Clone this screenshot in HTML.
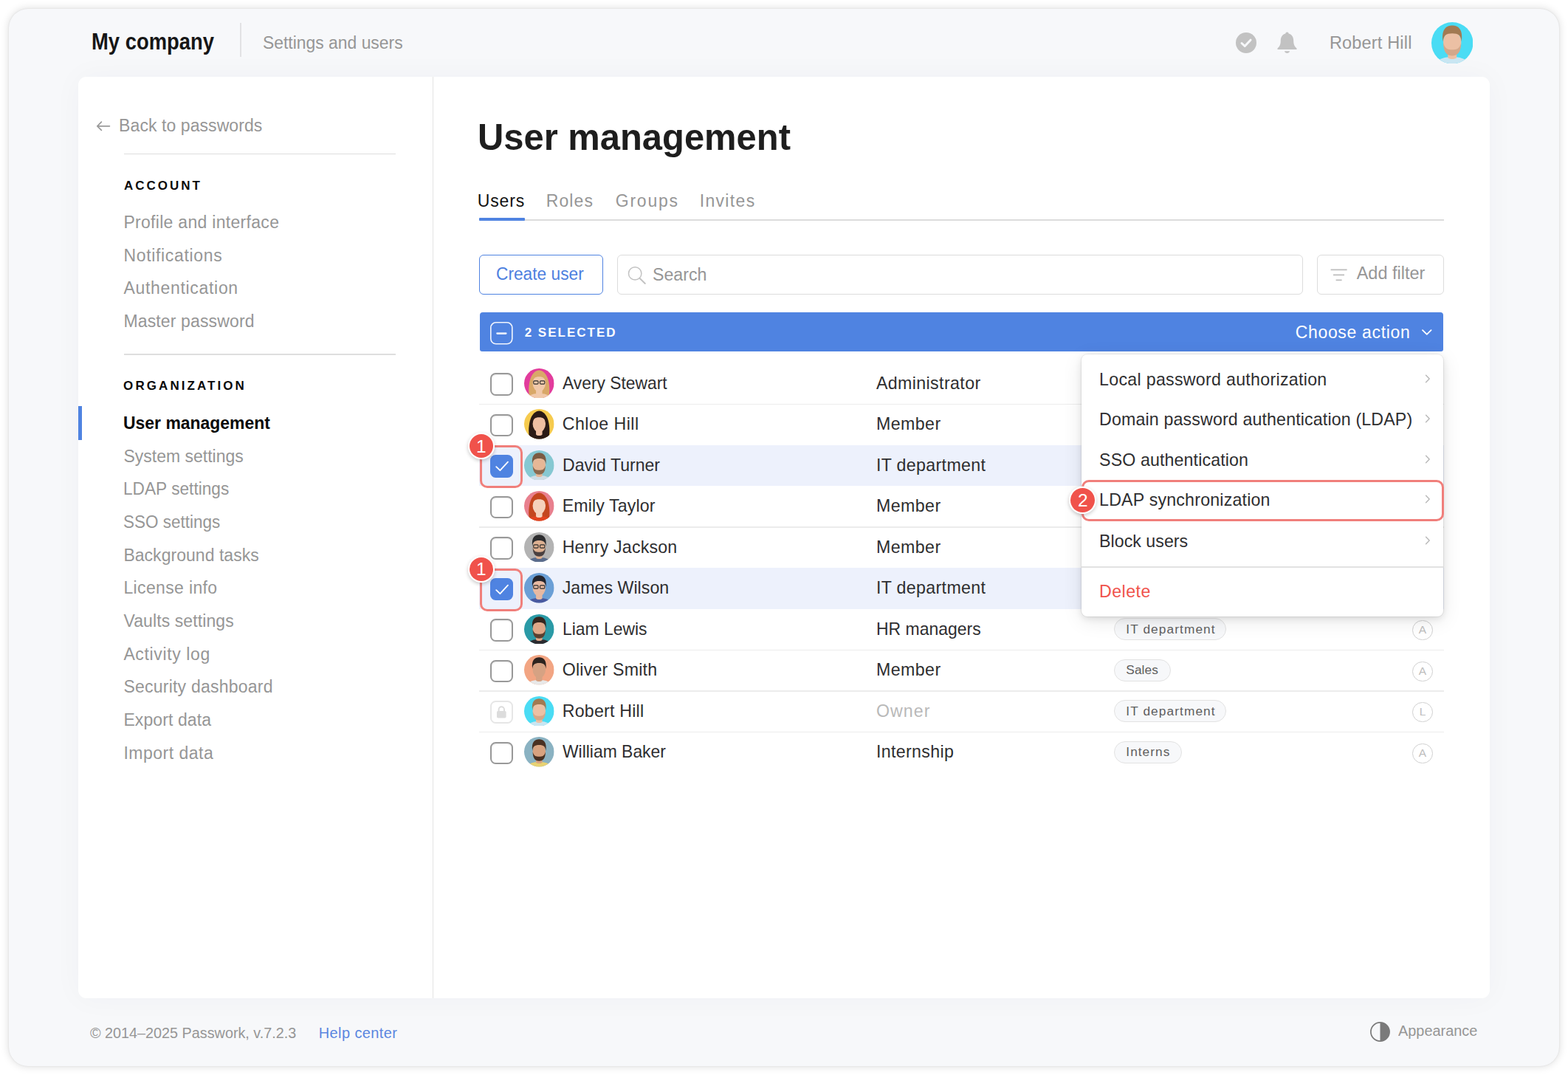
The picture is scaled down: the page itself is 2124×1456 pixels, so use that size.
<!DOCTYPE html>
<html lang="en"><head><meta charset="utf-8"><title>User management</title>
<style>
*{box-sizing:border-box;margin:0;padding:0}
html,body{width:2124px;height:1456px;background:#fff;overflow:hidden}
body{position:relative;font-family:"Liberation Sans",sans-serif;-webkit-font-smoothing:antialiased}
.abs{position:absolute;display:block}
.t{position:absolute;white-space:nowrap;line-height:1;display:block;transform-origin:0 0}
.frame{left:12px;top:12px;width:2100px;height:1432px;border-radius:26px;background:#f7f8fa;box-shadow:0 0 12px rgba(0,0,0,.15),0 0 2px rgba(0,0,0,.10)}
.card{left:106px;top:104.3px;width:1912px;height:1247.5px;border-radius:11px;background:#fff;box-shadow:0 0 40px rgba(40,50,80,.035)}
.hl{height:1.5px;background:#dedede}
.rowline{left:649px;width:1307px;height:1.4px;background:#ececec}
.rowsel{left:649px;width:1307px;height:55.2px;background:#edf1fc}
.cb{width:30.5px;height:30.5px;border-radius:7.5px;border:2px solid #999;background:#fff;box-shadow:inset 0 1px 2px rgba(0,0,0,.10)}
.cbc{width:30.5px;height:30.5px;border-radius:7.5px;background:#4f83e1}
.tag{height:29.8px;border-radius:15px;background:#f7f8fa;border:1.5px solid #e2e2e2}
.auth{width:27.4px;height:27.4px;border-radius:50%;border:1.9px solid #d0d0d0;background:#fff;color:#bdbdbd;font-size:15.5px;line-height:24px;text-align:center}
.redbox{border:3.3px solid #f07f7b;border-radius:10px}
.badge{width:32px;height:32px;border-radius:50%;background:#f0524b;box-shadow:0 0 0 2.2px #fff,0 2px 5px 2px rgba(0,0,0,.22);color:#fff;font-size:24.5px;line-height:32px;text-align:center}
</style></head><body>

<div class="abs frame"></div>
<div class="abs card"></div>
<div class="abs" style="left:325px;top:30.5px;width:1.5px;height:46px;background:#e2e2e4"></div>
<svg class="abs" style="left:1674px;top:44px" width="28" height="28" viewBox="0 0 28 28"><circle cx="14" cy="14" r="14" fill="#c2c2c2"/><path d="M8 14.5 L12.2 18.5 L20 10.2" fill="none" stroke="#f7f8fa" stroke-width="3" stroke-linecap="round" stroke-linejoin="round"/></svg>
<svg class="abs" style="left:1729px;top:42px" width="29" height="32" viewBox="0 0 29 32"><path d="M14.5 1.5 C15.8 1.5 16.6 2.4 16.6 3.6 C21 4.8 23.2 8.4 23.2 13 C23.2 18.5 24.6 21 27.5 23.4 L27.5 25 L1.5 25 L1.5 23.4 C4.4 21 5.8 18.5 5.8 13 C5.8 8.4 8 4.8 12.4 3.6 C12.4 2.4 13.2 1.5 14.5 1.5 Z" fill="#c2c2c2"/><path d="M11 27.2 L18 27.2 C17.6 29 16.3 30 14.5 30 C12.7 30 11.4 29 11 27.2 Z" fill="#c2c2c2"/></svg>
<svg class="abs" style="left:1938.8px;top:29.8px" width="56.4" height="56.4" viewBox="0 0 40 40"><defs><clipPath id="avH"><circle cx="20" cy="20" r="20"/></clipPath></defs><g clip-path="url(#avH)"><rect width="40" height="40" fill="#4adcf4"/><path d="M3 46 C3 35.5 11 33.6 20 33.6 C29 33.6 37 35.5 37 46 Z" fill="#c9e6f2"/><path d="M15.8 28 H24.2 V34 C22.8 36 17.2 36 15.8 34 Z" fill="#ecc0a4"/><ellipse cx="20" cy="19.6" rx="8.6" ry="11.2" fill="#ecc0a4"/><path d="M11.5 20 C11.6 30.4 16 32.2 20 32.2 C24 32.2 28.4 30.4 28.5 20 C27 25.6 24.4 26.4 20 26.4 C15.6 26.4 13 25.6 11.5 20 Z" fill="#d3a88a"/><path d="M11 18.6 C9.4 6.4 14.6 3.2 20 3.2 C25.4 3.2 30.6 6.4 29 18.6 C28.2 12.6 26 10.8 20 10.8 C14 10.8 11.8 12.6 11 18.6 Z" fill="#a27a52"/></g></svg>
<div class="abs" style="left:586.2px;top:104px;width:1.3px;height:1248px;background:#e3e3e3"></div>
<svg class="abs" style="left:130px;top:162px" width="20" height="18" viewBox="0 0 20 18"><path d="M18.4 8.8 L2.2 8.8 M7.4 3.2 L1.8 8.8 L7.4 14.4" fill="none" stroke="#9a9a9a" stroke-width="1.7" stroke-linecap="round" stroke-linejoin="round"/></svg>
<div class="abs hl" style="left:168px;top:207.6px;width:368px"></div>
<div class="abs hl" style="left:168px;top:479px;width:368px"></div>
<div class="abs" style="left:106px;top:550px;width:4.6px;height:46px;background:#4f83e1"></div>
<svg class="abs" style="left:1855px;top:1382.6px" width="29" height="29" viewBox="0 0 29 29"><circle cx="14.5" cy="14.5" r="12.6" fill="none" stroke="#7a7a7a" stroke-width="1.7"/><path d="M14.5 1.9 A12.6 12.6 0 0 1 14.5 27.1 Z" fill="#7a7a7a"/></svg>
<div class="abs" style="left:649px;top:297px;width:1307px;height:1.6px;background:#dcdcdc"></div>
<div class="abs" style="left:649px;top:295.2px;width:62px;height:3.6px;background:#4f83e1;border-radius:1px"></div>
<div class="abs" style="left:648.5px;top:345.1px;width:168.7px;height:53.7px;border:1.8px solid #4f83e1;border-radius:6px;background:#fff"></div>
<div class="abs" style="left:835.6px;top:345.1px;width:929.5px;height:53.7px;border:1.7px solid #dcdcdc;border-radius:6px;background:#fff"></div>
<svg class="abs" style="left:848px;top:358px" width="30" height="30" viewBox="0 0 30 30"><circle cx="12.2" cy="12.4" r="8.7" fill="none" stroke="#c2c2c2" stroke-width="1.5"/><path d="M18.4 18.8 L25.8 26" stroke="#c2c2c2" stroke-width="1.9" stroke-linecap="round"/></svg>
<div class="abs" style="left:1784.2px;top:345.1px;width:171.4px;height:53.7px;border:1.7px solid #dcdcdc;border-radius:6px;background:#fff"></div>
<svg class="abs" style="left:1800px;top:362px" width="28" height="20" viewBox="0 0 28 20"><path d="M2.6 3.4 H24.6 M6 10.4 H21 M9.6 17.4 H17.6" stroke="#bdbdbd" stroke-width="1.8" stroke-linecap="butt"/></svg>
<div class="abs" style="left:650px;top:423.3px;width:1305px;height:52.6px;background:#4f83e1;border-radius:4px 4px 3px 3px"></div>
<svg class="abs" style="left:663.3px;top:435.2px" width="33" height="33" viewBox="0 0 33 33"><rect x="1.8" y="1.8" width="29" height="29" rx="7" fill="none" stroke="#fff" stroke-opacity=".92" stroke-width="1.6"/><path d="M10.6 16.6 H22.2" stroke="#fff" stroke-opacity=".85" stroke-width="2.8" stroke-linecap="round"/></svg>
<svg class="abs" style="left:1924px;top:444px" width="18" height="12" viewBox="0 0 18 12"><path d="M3 3.2 L8.8 8.8 L14.6 3.2" fill="none" stroke="#fff" stroke-width="1.8" stroke-linecap="round" stroke-linejoin="round"/></svg>
<div class="abs rowsel" style="top:602.90px"></div>
<div class="abs rowsel" style="top:769.40px"></div>
<div class="abs rowline" style="top:546.80px"></div>
<div class="abs rowline" style="top:713.30px"></div>
<div class="abs rowline" style="top:879.80px"></div>
<div class="abs rowline" style="top:935.30px"></div>
<div class="abs rowline" style="top:990.80px"></div>
<div class="abs cb" style="left:664.3px;top:505.15px"></div>
<svg class="abs" style="left:710.3px;top:498.6px" width="40.6" height="40.6" viewBox="0 0 40 40"><defs><clipPath id="av0"><circle cx="20" cy="20" r="20"/></clipPath></defs><g clip-path="url(#av0)"><rect width="40" height="40" fill="#e23c9c"/><path d="M7.5 42 C4 26 7 3.5 20 2.5 C33 3.5 36 26 32.5 42 Z" fill="#d9a868"/><path d="M3 46 C3 35.5 11 33.6 20 33.6 C29 33.6 37 35.5 37 46 Z" fill="#f1c9ab"/><path d="M15.8 28 H24.2 V34 C22.8 36 17.2 36 15.8 34 Z" fill="#f1c9ab"/><ellipse cx="20" cy="19.6" rx="8.6" ry="11.2" fill="#f1c9ab"/><path d="M10.6 21 C9.6 8.5 14 5.6 20 5.6 C26 5.6 30.4 8.5 29.4 21 C28.6 13 25.4 11 20 11 C14.6 11 11.4 13 10.6 21 Z" fill="#d9a868"/><g fill="none" stroke="#2a2a2a" stroke-width="1.1"><rect x="12.6" y="16.6" width="6.2" height="4.2" rx="1.2"/><rect x="21.2" y="16.6" width="6.2" height="4.2" rx="1.2"/></g></g></svg>
<div class="abs cb" style="left:664.3px;top:560.65px"></div>
<svg class="abs" style="left:710.3px;top:554.1px" width="40.6" height="40.6" viewBox="0 0 40 40"><defs><clipPath id="av1"><circle cx="20" cy="20" r="20"/></clipPath></defs><g clip-path="url(#av1)"><rect width="40" height="40" fill="#f6cb4e"/><path d="M7.5 42 C4 26 7 3.5 20 2.5 C33 3.5 36 26 32.5 42 Z" fill="#2b1a15"/><path d="M3 46 C3 35.5 11 33.6 20 33.6 C29 33.6 37 35.5 37 46 Z" fill="#2b1a15"/><path d="M15.8 28 H24.2 V34 C22.8 36 17.2 36 15.8 34 Z" fill="#efbfa2"/><ellipse cx="20" cy="19.6" rx="8.6" ry="11.2" fill="#efbfa2"/><path d="M10.6 21 C9.6 8.5 14 5.6 20 5.6 C26 5.6 30.4 8.5 29.4 21 C28.6 13 25.4 11 20 11 C14.6 11 11.4 13 10.6 21 Z" fill="#2b1a15"/></g></svg>
<div class="abs cbc" style="left:664.3px;top:616.15px"></div>
<svg class="abs" style="left:664.3px;top:616.15px" width="30.5" height="30.5" viewBox="0 0 30.5 30.5"><path d="M8.2 16.2 L13.4 21.2 L24 9.6" fill="none" stroke="#fff" stroke-width="1.8" stroke-linecap="round" stroke-linejoin="round"/></svg>
<svg class="abs" style="left:710.3px;top:609.6px" width="40.6" height="40.6" viewBox="0 0 40 40"><defs><clipPath id="av2"><circle cx="20" cy="20" r="20"/></clipPath></defs><g clip-path="url(#av2)"><rect width="40" height="40" fill="#86c8d2"/><path d="M3 46 C3 35.5 11 33.6 20 33.6 C29 33.6 37 35.5 37 46 Z" fill="#cfdde6"/><path d="M15.8 28 H24.2 V34 C22.8 36 17.2 36 15.8 34 Z" fill="#e6b796"/><ellipse cx="20" cy="19.6" rx="8.6" ry="11.2" fill="#e6b796"/><path d="M11.5 20 C11.6 30.4 16 32.2 20 32.2 C24 32.2 28.4 30.4 28.5 20 C27 25.6 24.4 26.4 20 26.4 C15.6 26.4 13 25.6 11.5 20 Z" fill="#8a6a50"/><path d="M11 18.6 C9.4 6.4 14.6 3.2 20 3.2 C25.4 3.2 30.6 6.4 29 18.6 C28.2 12.6 26 10.8 20 10.8 C14 10.8 11.8 12.6 11 18.6 Z" fill="#7b5b42"/></g></svg>
<div class="abs cb" style="left:664.3px;top:671.65px"></div>
<svg class="abs" style="left:710.3px;top:665.1px" width="40.6" height="40.6" viewBox="0 0 40 40"><defs><clipPath id="av3"><circle cx="20" cy="20" r="20"/></clipPath></defs><g clip-path="url(#av3)"><rect width="40" height="40" fill="#e8808e"/><path d="M7.5 42 C4 26 7 3.5 20 2.5 C33 3.5 36 26 32.5 42 Z" fill="#c4471f"/><path d="M3 46 C3 35.5 11 33.6 20 33.6 C29 33.6 37 35.5 37 46 Z" fill="#e2441f"/><path d="M15.8 28 H24.2 V34 C22.8 36 17.2 36 15.8 34 Z" fill="#f5d2bc"/><ellipse cx="20" cy="19.6" rx="8.6" ry="11.2" fill="#f5d2bc"/><path d="M10.6 21 C9.6 8.5 14 5.6 20 5.6 C26 5.6 30.4 8.5 29.4 21 C28.6 13 25.4 11 20 11 C14.6 11 11.4 13 10.6 21 Z" fill="#c4471f"/></g></svg>
<div class="abs cb" style="left:664.3px;top:727.15px"></div>
<svg class="abs" style="left:710.3px;top:720.6px" width="40.6" height="40.6" viewBox="0 0 40 40"><defs><clipPath id="av4"><circle cx="20" cy="20" r="20"/></clipPath></defs><g clip-path="url(#av4)"><rect width="40" height="40" fill="#b3b3b3"/><path d="M3 46 C3 35.5 11 33.6 20 33.6 C29 33.6 37 35.5 37 46 Z" fill="#5a6c8c"/><path d="M15.8 28 H24.2 V34 C22.8 36 17.2 36 15.8 34 Z" fill="#ddb091"/><ellipse cx="20" cy="19.6" rx="8.6" ry="11.2" fill="#ddb091"/><path d="M11.5 20 C11.6 30.4 16 32.2 20 32.2 C24 32.2 28.4 30.4 28.5 20 C27 25.6 24.4 26.4 20 26.4 C15.6 26.4 13 25.6 11.5 20 Z" fill="#4a4040"/><path d="M11 18.6 C9.4 6.4 14.6 3.2 20 3.2 C25.4 3.2 30.6 6.4 29 18.6 C28.2 12.6 26 10.8 20 10.8 C14 10.8 11.8 12.6 11 18.6 Z" fill="#2c2c2e"/><g fill="none" stroke="#2a2a2a" stroke-width="1.1"><rect x="12.6" y="16.6" width="6.2" height="4.2" rx="1.2"/><rect x="21.2" y="16.6" width="6.2" height="4.2" rx="1.2"/></g></g></svg>
<div class="abs cbc" style="left:664.3px;top:782.65px"></div>
<svg class="abs" style="left:664.3px;top:782.65px" width="30.5" height="30.5" viewBox="0 0 30.5 30.5"><path d="M8.2 16.2 L13.4 21.2 L24 9.6" fill="none" stroke="#fff" stroke-width="1.8" stroke-linecap="round" stroke-linejoin="round"/></svg>
<svg class="abs" style="left:710.3px;top:776.1px" width="40.6" height="40.6" viewBox="0 0 40 40"><defs><clipPath id="av5"><circle cx="20" cy="20" r="20"/></clipPath></defs><g clip-path="url(#av5)"><rect width="40" height="40" fill="#6b9fd6"/><path d="M3 46 C3 35.5 11 33.6 20 33.6 C29 33.6 37 35.5 37 46 Z" fill="#4a5aa0"/><path d="M15.8 28 H24.2 V34 C22.8 36 17.2 36 15.8 34 Z" fill="#e8b9a2"/><ellipse cx="20" cy="19.6" rx="8.6" ry="11.2" fill="#e8b9a2"/><path d="M11 18.6 C9.4 6.4 14.6 3.2 20 3.2 C25.4 3.2 30.6 6.4 29 18.6 C28.2 12.6 26 10.8 20 10.8 C14 10.8 11.8 12.6 11 18.6 Z" fill="#24242c"/><g fill="none" stroke="#2a2a2a" stroke-width="1.1"><rect x="12.6" y="16.6" width="6.2" height="4.2" rx="1.2"/><rect x="21.2" y="16.6" width="6.2" height="4.2" rx="1.2"/></g></g></svg>
<div class="abs cb" style="left:664.3px;top:838.15px"></div>
<svg class="abs" style="left:710.3px;top:831.6px" width="40.6" height="40.6" viewBox="0 0 40 40"><defs><clipPath id="av6"><circle cx="20" cy="20" r="20"/></clipPath></defs><g clip-path="url(#av6)"><rect width="40" height="40" fill="#2a9aa6"/><path d="M3 46 C3 35.5 11 33.6 20 33.6 C29 33.6 37 35.5 37 46 Z" fill="#2b2b30"/><path d="M15.8 28 H24.2 V34 C22.8 36 17.2 36 15.8 34 Z" fill="#dfa888"/><ellipse cx="20" cy="19.6" rx="8.6" ry="11.2" fill="#dfa888"/><path d="M11.5 20 C11.6 30.4 16 32.2 20 32.2 C24 32.2 28.4 30.4 28.5 20 C27 25.6 24.4 26.4 20 26.4 C15.6 26.4 13 25.6 11.5 20 Z" fill="#5a4030"/><path d="M11 18.6 C9.4 6.4 14.6 3.2 20 3.2 C25.4 3.2 30.6 6.4 29 18.6 C28.2 12.6 26 10.8 20 10.8 C14 10.8 11.8 12.6 11 18.6 Z" fill="#36271f"/></g></svg>
<div class="abs tag" style="left:1509.2px;top:837.45px;width:152.0px"></div>
<div class="abs auth" style="left:1913.3px;top:840.00px">A</div>
<div class="abs cb" style="left:664.3px;top:893.65px"></div>
<svg class="abs" style="left:710.3px;top:887.1px" width="40.6" height="40.6" viewBox="0 0 40 40"><defs><clipPath id="av7"><circle cx="20" cy="20" r="20"/></clipPath></defs><g clip-path="url(#av7)"><rect width="40" height="40" fill="#f2a583"/><path d="M3 46 C3 35.5 11 33.6 20 33.6 C29 33.6 37 35.5 37 46 Z" fill="#e8e8e8"/><path d="M15.8 28 H24.2 V34 C22.8 36 17.2 36 15.8 34 Z" fill="#d6a283"/><ellipse cx="20" cy="19.6" rx="8.6" ry="11.2" fill="#d6a283"/><path d="M11 18.6 C9.4 6.4 14.6 3.2 20 3.2 C25.4 3.2 30.6 6.4 29 18.6 C28.2 12.6 26 10.8 20 10.8 C14 10.8 11.8 12.6 11 18.6 Z" fill="#2d231f"/></g></svg>
<div class="abs tag" style="left:1509.2px;top:892.95px;width:76.5px"></div>
<div class="abs auth" style="left:1913.3px;top:895.50px">A</div>
<div class="abs cb" style="left:664.3px;top:949.15px;border-color:#e6e6e6;border-width:2.2px;box-shadow:none"></div>
<svg class="abs" style="left:664.3px;top:949.15px" width="30.5" height="30.5" viewBox="0 0 30.5 30.5"><rect x="9" y="14" width="12.6" height="9.4" rx="1.6" fill="#dcdcdc"/><path d="M11.6 14.5 V12 A3.7 3.7 0 0 1 19 12 V14.5" fill="none" stroke="#dcdcdc" stroke-width="2"/></svg>
<svg class="abs" style="left:710.3px;top:942.6px" width="40.6" height="40.6" viewBox="0 0 40 40"><defs><clipPath id="av8"><circle cx="20" cy="20" r="20"/></clipPath></defs><g clip-path="url(#av8)"><rect width="40" height="40" fill="#4adcf4"/><path d="M3 46 C3 35.5 11 33.6 20 33.6 C29 33.6 37 35.5 37 46 Z" fill="#c9e6f2"/><path d="M15.8 28 H24.2 V34 C22.8 36 17.2 36 15.8 34 Z" fill="#ecc0a4"/><ellipse cx="20" cy="19.6" rx="8.6" ry="11.2" fill="#ecc0a4"/><path d="M11.5 20 C11.6 30.4 16 32.2 20 32.2 C24 32.2 28.4 30.4 28.5 20 C27 25.6 24.4 26.4 20 26.4 C15.6 26.4 13 25.6 11.5 20 Z" fill="#d3a88a"/><path d="M11 18.6 C9.4 6.4 14.6 3.2 20 3.2 C25.4 3.2 30.6 6.4 29 18.6 C28.2 12.6 26 10.8 20 10.8 C14 10.8 11.8 12.6 11 18.6 Z" fill="#a27a52"/></g></svg>
<div class="abs tag" style="left:1509.2px;top:948.45px;width:152.0px"></div>
<div class="abs auth" style="left:1913.3px;top:951.00px">L</div>
<div class="abs cb" style="left:664.3px;top:1004.65px"></div>
<svg class="abs" style="left:710.3px;top:998.1px" width="40.6" height="40.6" viewBox="0 0 40 40"><defs><clipPath id="av9"><circle cx="20" cy="20" r="20"/></clipPath></defs><g clip-path="url(#av9)"><rect width="40" height="40" fill="#8ab2c2"/><path d="M3 46 C3 35.5 11 33.6 20 33.6 C29 33.6 37 35.5 37 46 Z" fill="#e8d272"/><path d="M15.8 28 H24.2 V34 C22.8 36 17.2 36 15.8 34 Z" fill="#d8a27f"/><ellipse cx="20" cy="19.6" rx="8.6" ry="11.2" fill="#d8a27f"/><path d="M11.5 20 C11.6 30.4 16 32.2 20 32.2 C24 32.2 28.4 30.4 28.5 20 C27 25.6 24.4 26.4 20 26.4 C15.6 26.4 13 25.6 11.5 20 Z" fill="#4a3122"/><path d="M11 18.6 C9.4 6.4 14.6 3.2 20 3.2 C25.4 3.2 30.6 6.4 29 18.6 C28.2 12.6 26 10.8 20 10.8 C14 10.8 11.8 12.6 11 18.6 Z" fill="#4a3122"/></g></svg>
<div class="abs tag" style="left:1509.2px;top:1003.95px;width:92.2px"></div>
<div class="abs auth" style="left:1913.3px;top:1006.50px">A</div>
<div class="abs" style="left:1465.2px;top:479.6px;width:490.2px;height:355.8px;background:#fff;border-radius:8px;box-shadow:0 0 0 1px rgba(0,0,0,.06),0 3px 10px rgba(0,0,0,.10),0 6px 28px rgba(0,0,0,.09)"></div>
<div class="abs" style="left:1465.2px;top:767.4px;width:490.2px;height:1.6px;background:#e2e2e2"></div>
<svg class="abs" style="left:1928px;top:504.8px" width="12" height="16" viewBox="0 0 12 16"><path d="M3.6 3.2 L8.2 8 L3.6 12.8" fill="none" stroke="#b8b8b8" stroke-width="1.4" stroke-linecap="round" stroke-linejoin="round"/></svg>
<svg class="abs" style="left:1928px;top:559.1px" width="12" height="16" viewBox="0 0 12 16"><path d="M3.6 3.2 L8.2 8 L3.6 12.8" fill="none" stroke="#b8b8b8" stroke-width="1.4" stroke-linecap="round" stroke-linejoin="round"/></svg>
<svg class="abs" style="left:1928px;top:614.0px" width="12" height="16" viewBox="0 0 12 16"><path d="M3.6 3.2 L8.2 8 L3.6 12.8" fill="none" stroke="#b8b8b8" stroke-width="1.4" stroke-linecap="round" stroke-linejoin="round"/></svg>
<svg class="abs" style="left:1928px;top:667.8px" width="12" height="16" viewBox="0 0 12 16"><path d="M3.6 3.2 L8.2 8 L3.6 12.8" fill="none" stroke="#b8b8b8" stroke-width="1.4" stroke-linecap="round" stroke-linejoin="round"/></svg>
<svg class="abs" style="left:1928px;top:723.7px" width="12" height="16" viewBox="0 0 12 16"><path d="M3.6 3.2 L8.2 8 L3.6 12.8" fill="none" stroke="#b8b8b8" stroke-width="1.4" stroke-linecap="round" stroke-linejoin="round"/></svg>
<div class="abs redbox" style="left:1465.2px;top:650.2px;width:490.4px;height:55.4px"></div>
<div class="abs redbox" style="left:650.2px;top:603.00px;width:57.8px;height:58px"></div>
<div class="abs badge" style="left:636px;top:588.20px"><span style="position:relative;left:-0.2px;top:0.8px">1</span></div>
<div class="abs redbox" style="left:650.2px;top:769.50px;width:57.8px;height:58px"></div>
<div class="abs badge" style="left:636px;top:754.70px"><span style="position:relative;left:-0.2px;top:0.8px">1</span></div>
<div class="abs badge" style="left:1450.2px;top:660.9px;width:33.2px;height:33.2px;line-height:33.2px"><span style="position:relative;left:0px;top:0.6px">2</span></div>
<span class="t" id="h_company" style="left:124.10px;top:41.36px;font-size:31px;color:#161616;font-weight:700;transform:scaleX(0.8841);">My company</span>
<span class="t" id="h_settings" style="left:356.10px;top:46.91px;font-size:23.5px;color:#969696;transform:scaleX(0.9741);">Settings and users</span>
<span class="t" id="h_user" style="left:1800.90px;top:46.81px;font-size:23.5px;color:#969696;letter-spacing:0.180px;">Robert Hill</span>
<span class="t" id="s_back" style="left:161.10px;top:159.23px;font-size:23px;color:#969696;letter-spacing:0.075px;">Back to passwords</span>
<span class="t" id="s_account" style="left:168.10px;top:243.11px;font-size:17px;color:#0a0a0a;font-weight:700;letter-spacing:2.983px;">ACCOUNT</span>
<span class="t" id="s_a0" style="left:167.40px;top:290.03px;font-size:23px;color:#969696;letter-spacing:0.300px;">Profile and interface</span>
<span class="t" id="s_a1" style="left:167.40px;top:334.71px;font-size:23px;color:#969696;letter-spacing:0.667px;">Notifications</span>
<span class="t" id="s_a2" style="left:167.40px;top:379.39px;font-size:23px;color:#969696;letter-spacing:0.692px;">Authentication</span>
<span class="t" id="s_a3" style="left:167.40px;top:424.07px;font-size:23px;color:#969696;letter-spacing:0.143px;">Master password</span>
<span class="t" id="s_org" style="left:167.10px;top:514.11px;font-size:17px;color:#0a0a0a;font-weight:700;letter-spacing:3.072px;">ORGANIZATION</span>
<span class="t" id="s_um" style="left:167.10px;top:561.08px;font-size:24px;color:#0a0a0a;font-weight:700;transform:scaleX(0.9558);">User management</span>
<span class="t" id="s_o0" style="left:167.40px;top:606.73px;font-size:23px;color:#969696;letter-spacing:0.001px;">System settings</span>
<span class="t" id="s_o1" style="left:167.40px;top:651.41px;font-size:23px;color:#969696;transform:scaleX(0.9860);">LDAP settings</span>
<span class="t" id="s_o2" style="left:167.40px;top:696.09px;font-size:23px;color:#969696;transform:scaleX(0.9773);">SSO settings</span>
<span class="t" id="s_o3" style="left:167.40px;top:740.77px;font-size:23px;color:#969696;letter-spacing:0.033px;">Background tasks</span>
<span class="t" id="s_o4" style="left:167.40px;top:785.45px;font-size:23px;color:#969696;letter-spacing:0.364px;">License info</span>
<span class="t" id="s_o5" style="left:167.40px;top:830.13px;font-size:23px;color:#969696;letter-spacing:0.107px;">Vaults settings</span>
<span class="t" id="s_o6" style="left:167.40px;top:874.81px;font-size:23px;color:#969696;letter-spacing:0.636px;">Activity log</span>
<span class="t" id="s_o7" style="left:167.40px;top:919.49px;font-size:23px;color:#969696;letter-spacing:0.235px;">Security dashboard</span>
<span class="t" id="s_o8" style="left:167.40px;top:964.17px;font-size:23px;color:#969696;letter-spacing:0.100px;">Export data</span>
<span class="t" id="s_o9" style="left:167.40px;top:1008.85px;font-size:23px;color:#969696;letter-spacing:0.500px;">Import data</span>
<span class="t" id="f_copy" style="left:121.70px;top:1388.57px;font-size:20px;color:#969696;transform:scaleX(0.9893);">© 2014–2025 Passwork, v.7.2.3</span>
<span class="t" id="f_help" style="left:431.70px;top:1388.57px;font-size:20px;color:#5b86e0;letter-spacing:0.400px;">Help center</span>
<span class="t" id="f_app" style="left:1893.70px;top:1386.37px;font-size:20px;color:#969696;transform:scaleX(0.9954);">Appearance</span>
<span class="t" id="m_h1" style="left:646.50px;top:160.67px;font-size:50.6px;color:#1e1e1e;font-weight:700;transform:scaleX(0.9665);">User management</span>
<span class="t" id="t_users" style="left:646.70px;top:261.03px;font-size:23px;color:#111;letter-spacing:0.875px;">Users</span>
<span class="t" id="t_roles" style="left:739.70px;top:261.03px;font-size:23px;color:#969696;letter-spacing:1.125px;">Roles</span>
<span class="t" id="t_groups" style="left:833.70px;top:261.03px;font-size:23px;color:#969696;letter-spacing:1.800px;">Groups</span>
<span class="t" id="t_invites" style="left:947.70px;top:261.03px;font-size:23px;color:#969696;letter-spacing:1.333px;">Invites</span>
<span class="t" id="b_create" style="left:671.70px;top:359.91px;font-size:23.5px;color:#4d80df;transform:scaleX(0.9670);">Create user</span>
<span class="t" id="b_search" style="left:883.70px;top:361.21px;font-size:23.5px;color:#969696;transform:scaleX(0.9863);">Search</span>
<span class="t" id="b_filter" style="left:1837.70px;top:359.21px;font-size:23.5px;color:#969696;">Add filter</span>
<span class="t" id="b_sel" style="left:710.70px;top:442.41px;font-size:17px;color:#fff;font-weight:700;letter-spacing:2.000px;">2 SELECTED</span>
<span class="t" id="b_choose" style="left:1754.70px;top:438.63px;font-size:23px;color:#fff;letter-spacing:0.667px;">Choose action</span>
<span class="t" id="r_n0" style="left:761.70px;top:507.96px;font-size:23.2px;color:#2e2e30;transform:scaleX(0.9841);">Avery Stewart</span>
<span class="t" id="r_r0" style="left:1186.90px;top:507.86px;font-size:23.2px;color:#2e2e30;letter-spacing:0.392px;">Administrator</span>
<span class="t" id="r_n1" style="left:761.70px;top:563.46px;font-size:23.2px;color:#2e2e30;letter-spacing:0.467px;">Chloe Hill</span>
<span class="t" id="r_r1" style="left:1186.90px;top:563.36px;font-size:23.2px;color:#2e2e30;letter-spacing:0.440px;">Member</span>
<span class="t" id="r_n2" style="left:761.70px;top:618.96px;font-size:23.2px;color:#2e2e30;transform:scaleX(0.9940);">David Turner</span>
<span class="t" id="r_r2" style="left:1186.90px;top:618.86px;font-size:23.2px;color:#2e2e30;letter-spacing:0.350px;">IT department</span>
<span class="t" id="r_n3" style="left:761.70px;top:674.46px;font-size:23.2px;color:#2e2e30;letter-spacing:0.109px;">Emily Taylor</span>
<span class="t" id="r_r3" style="left:1186.90px;top:674.36px;font-size:23.2px;color:#2e2e30;letter-spacing:0.440px;">Member</span>
<span class="t" id="r_n4" style="left:761.70px;top:729.96px;font-size:23.2px;color:#2e2e30;letter-spacing:0.184px;">Henry Jackson</span>
<span class="t" id="r_r4" style="left:1186.90px;top:729.86px;font-size:23.2px;color:#2e2e30;letter-spacing:0.440px;">Member</span>
<span class="t" id="r_n5" style="left:761.70px;top:785.46px;font-size:23.2px;color:#2e2e30;letter-spacing:0.018px;">James Wilson</span>
<span class="t" id="r_r5" style="left:1186.90px;top:785.36px;font-size:23.2px;color:#2e2e30;letter-spacing:0.350px;">IT department</span>
<span class="t" id="r_n6" style="left:761.70px;top:840.96px;font-size:23.2px;color:#2e2e30;transform:scaleX(0.9876);">Liam Lewis</span>
<span class="t" id="r_r6" style="left:1186.90px;top:840.86px;font-size:23.2px;color:#2e2e30;transform:scaleX(0.9906);">HR managers</span>
<span class="t" id="r_t6" style="left:1525.30px;top:843.96px;font-size:17.3px;color:#5e5e5e;letter-spacing:1.084px;">IT department</span>
<span class="t" id="r_n7" style="left:761.70px;top:896.46px;font-size:23.2px;color:#2e2e30;letter-spacing:0.200px;">Oliver Smith</span>
<span class="t" id="r_r7" style="left:1186.90px;top:896.36px;font-size:23.2px;color:#2e2e30;letter-spacing:0.440px;">Member</span>
<span class="t" id="r_t7" style="left:1525.30px;top:899.46px;font-size:17.3px;color:#5e5e5e;letter-spacing:0.064px;">Sales</span>
<span class="t" id="r_n8" style="left:761.70px;top:951.96px;font-size:23.2px;color:#2e2e30;letter-spacing:0.220px;">Robert Hill</span>
<span class="t" id="r_r8" style="left:1186.90px;top:951.86px;font-size:23.2px;color:#b9b9b9;letter-spacing:1.050px;">Owner</span>
<span class="t" id="r_t8" style="left:1525.30px;top:954.96px;font-size:17.3px;color:#5e5e5e;letter-spacing:1.084px;">IT department</span>
<span class="t" id="r_n9" style="left:761.70px;top:1007.46px;font-size:23.2px;color:#2e2e30;transform:scaleX(0.9873);">William Baker</span>
<span class="t" id="r_r9" style="left:1186.90px;top:1007.36px;font-size:23.2px;color:#2e2e30;letter-spacing:0.355px;">Internship</span>
<span class="t" id="r_t9" style="left:1525.30px;top:1010.46px;font-size:17.3px;color:#5e5e5e;letter-spacing:1.033px;">Interns</span>
<span class="t" id="d_0" style="left:1489.10px;top:502.86px;font-size:23.2px;color:#2e2e30;letter-spacing:0.289px;">Local password authorization</span>
<span class="t" id="d_1" style="left:1489.10px;top:557.16px;font-size:23.2px;color:#2e2e30;letter-spacing:0.144px;">Domain password authentication (LDAP)</span>
<span class="t" id="d_2" style="left:1489.10px;top:612.06px;font-size:23.2px;color:#2e2e30;letter-spacing:0.117px;">SSO authentication</span>
<span class="t" id="d_3" style="left:1489.10px;top:665.86px;font-size:23.2px;color:#2e2e30;letter-spacing:0.195px;">LDAP synchronization</span>
<span class="t" id="d_4" style="left:1489.10px;top:721.76px;font-size:23.2px;color:#2e2e30;letter-spacing:0.020px;">Block users</span>
<span class="t" id="d_5" style="left:1489.10px;top:789.76px;font-size:23.2px;color:#f0524b;letter-spacing:0.440px;">Delete</span>
</body></html>
